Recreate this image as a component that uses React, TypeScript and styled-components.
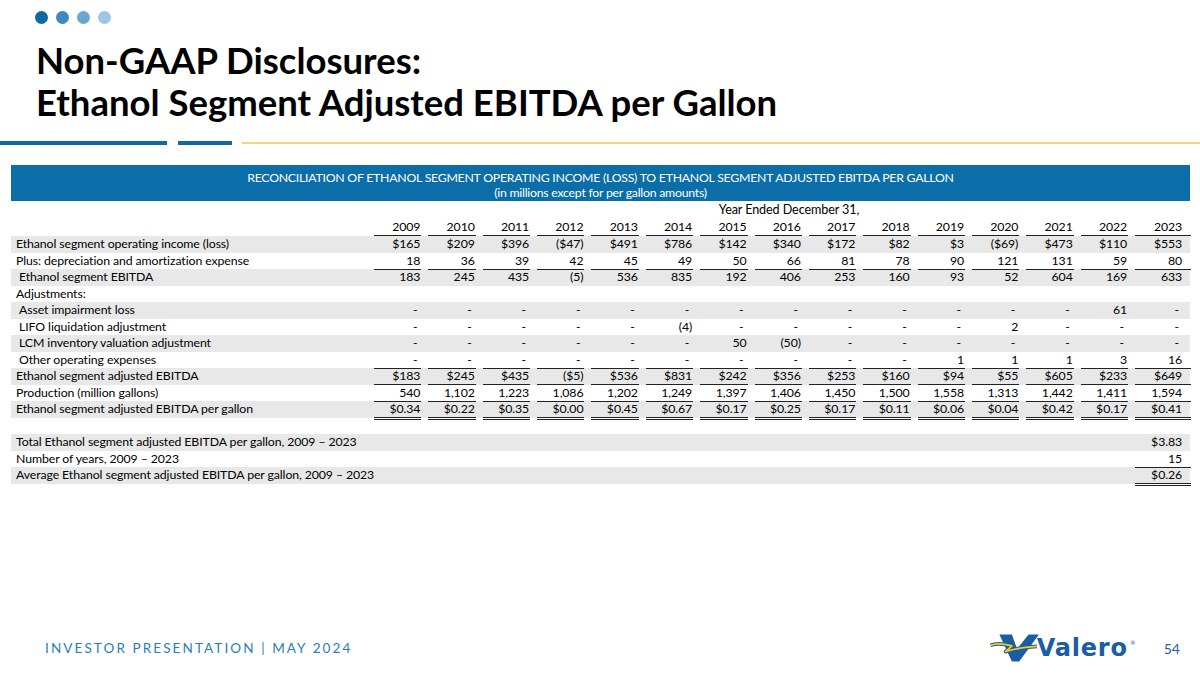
import React from "react";
import styled, { createGlobalStyle } from "styled-components";

const Global = createGlobalStyle`
  html, body { margin: 0; padding: 0; background: #ffffff; }
  body { font-family: Lato, "Open Sans", sans-serif; color: #111; }
  * { box-sizing: border-box; }
`;

const Slide = styled.div`
  width: 1200px;
  height: 675px;
  display: flex;
  flex-direction: column;
  overflow: hidden;
  background: #fff;
`;

const Dots = styled.div`
  display: flex;
  gap: 8px;
  padding: 11px 0 0 35px;
`;

const Dot = styled.span<{ $c: string }>`
  width: 13px;
  height: 13px;
  border-radius: 50%;
  background: ${(p) => p.$c};
`;

const Title = styled.h1`
  margin: 15px 0 0 36px;
  font-family: Lato, sans-serif;
  font-weight: 700;
  font-size: 36.5px;
  line-height: 42px;
  color: #000;
`;

const Rule = styled.div`
  display: flex;
  align-items: center;
  margin-top: 18px;
  height: 4px;
  width: 1200px;
`;

const RuleSeg = styled.div<{ $w: number; $ml: number }>`
  flex: none;
  width: ${(p) => p.$w}px;
  margin-left: ${(p) => p.$ml}px;
  height: 4px;
  background: #1068a8;
`;

const GoldLine = styled.div`
  width: 958px;
  margin-left: 10px;
  height: 2px;
  background: #f4d77c;
`;

const Table = styled.div`
  margin: 20px 10px 0 10px;
  width: 1180px;
  font-size: 12.3px;
  letter-spacing: -0.1px;
  color: #000;
`;

const HeaderBar = styled.div`
  background: #0b6ea9;
  color: #fff;
  text-align: center;
  padding: 5px 0 1px;
  line-height: 15px;
  height: 36px;
  margin-left: 1px;
  letter-spacing: -0.25px;
`;

const GRID = "356px repeat(14, 54.36px) 63px";

const Row = styled.div<{ $shade?: boolean; $tall?: boolean }>`
  display: grid;
  grid-template-columns: ${GRID};
  height: ${(p) => (p.$tall ? 17.5 : 16.5)}px;
  background: ${(p) => (p.$shade ? "#e8e8e8" : "transparent")};
  margin-left: 1px;
`;

const YearCaption = styled.div`
  grid-column: 2 / -1;
  text-align: center;
  padding-left: 20px;
  line-height: 18px;
  font-size: 12.6px;
`;

const Label = styled.div<{ $indent?: boolean }>`
  padding-left: ${(p) => (p.$indent ? 8 : 5)}px;
  line-height: 16.5px;
  white-space: nowrap;
`;

const WideLabel = styled(Label)`
  grid-column: 1 / 16;
`;

const Cell = styled.div<{ $line?: "single" | "double"; $dash?: boolean; $last?: boolean }>`
  margin-left: 7px;
  text-align: right;
  white-space: nowrap;
  line-height: 16px;
  padding-right: ${(p) => (p.$last ? 9 : 1) + (p.$dash ? 3 : 0)}px;
  border-bottom: ${(p) =>
    p.$line === "double" ? "3px double #222" : p.$line === "single" ? "1px solid #222" : "none"};
`;

const Footer = styled.div`
  margin-top: auto;
  display: flex;
  align-items: center;
  height: 36px;
  margin-bottom: 9px;
  padding-left: 45px;
`;

const FooterText = styled.div`
  font-family: Lato, sans-serif;
  font-size: 13.5px;
  letter-spacing: 2.1px;
  color: #2a7db9;
`;

const Logo = styled.div`
  margin-left: auto;
  display: flex;
  align-items: center;
`;

const LogoWord = styled.span`
  font-family: "DejaVu Sans", sans-serif;
  font-weight: 700;
  font-size: 24px;
  letter-spacing: 0.8px;
  color: #1a5ca6;
  margin-left: -3px;
`;

const Reg = styled.sup`
  font-family: "DejaVu Sans", sans-serif;
  font-size: 6px;
  color: #1a5ca6;
  margin-left: 2px;
  align-self: flex-start;
  margin-top: 6px;
`;

const PageNum = styled.div`
  font-family: Lato, sans-serif;
  font-size: 14px;
  color: #1f5f9c;
  margin: 0 20px 0 28px;
`;

const years = ["2009","2010","2011","2012","2013","2014","2015","2016","2017","2018","2019","2020","2021","2022","2023"];

type Line = "single" | "double" | undefined;
type DataRow = { label: string; indent?: boolean; values?: string[]; line?: Line };

const d = (arr: (string | number)[]) => arr.map(String);

const rows: DataRow[] = [
  { label: "Ethanol segment operating income (loss)", values: d(["$165","$209","$396","($47)","$491","$786","$142","$340","$172","$82","$3","($69)","$473","$110","$553"]) },
  { label: "Plus: depreciation and amortization expense", values: d([18,36,39,42,45,49,50,66,81,78,90,121,131,59,80]), line: "single" },
  { label: "Ethanol segment EBITDA", indent: true, values: d([183,245,435,"(5)",536,835,192,406,253,160,93,52,604,169,633]) },
  { label: "Adjustments:" },
  { label: "Asset impairment loss", indent: true, values: d(["-","-","-","-","-","-","-","-","-","-","-","-","-","61","-"]) },
  { label: "LIFO liquidation adjustment", indent: true, values: d(["-","-","-","-","-","(4)","-","-","-","-","-","2","-","-","-"]) },
  { label: "LCM inventory valuation adjustment", indent: true, values: d(["-","-","-","-","-","-","50","(50)","-","-","-","-","-","-","-"]) },
  { label: "Other operating expenses", indent: true, values: d(["-","-","-","-","-","-","-","-","-","-","1","1","1","3","16"]), line: "single" },
  { label: "Ethanol segment adjusted EBITDA", values: d(["$183","$245","$435","($5)","$536","$831","$242","$356","$253","$160","$94","$55","$605","$233","$649"]), line: "single" },
  { label: "Production (million gallons)", values: d(["540","1,102","1,223","1,086","1,202","1,249","1,397","1,406","1,450","1,500","1,558","1,313","1,442","1,411","1,594"]), line: "single" },
  { label: "Ethanol segment adjusted EBITDA per gallon", values: d(["$0.34","$0.22","$0.35","$0.00","$0.45","$0.67","$0.17","$0.25","$0.17","$0.11","$0.06","$0.04","$0.42","$0.17","$0.41"]), line: "double" },
];

type TotalRow = { label: string; value: string; line?: Line };
const totals: TotalRow[] = [
  { label: "Total Ethanol segment adjusted EBITDA per gallon, 2009 \u2013 2023", value: "$3.83" },
  { label: "Number of years, 2009 \u2013 2023", value: "15", line: "single" },
  { label: "Average Ethanol segment adjusted EBITDA per gallon, 2009 \u2013 2023", value: "$0.26", line: "double" },
];

const ValeroMark = () => (
  <svg width="50" height="30" viewBox="0 0 48 28" style={{ display: "block" }}>
    <polygon points="9,1 21,1 26,15 37,1 47,1 28,27 21,27" fill="#1a5ca6" />
    <path
      d="M0.5,11.5 C6,9 12,9.5 21,12 L15,17.5 C22,15 32,13.5 45,12.5"
      fill="none"
      stroke="#1a5ca6"
      strokeWidth="3.6"
      strokeLinejoin="round"
    />
    <path
      d="M0.5,11.5 C6,9 12,9.5 21,12 L15,17.5 C22,15 32,13.5 45,12.5"
      fill="none"
      stroke="#f3cc1c"
      strokeWidth="1.8"
      strokeLinejoin="round"
    />
  </svg>
);

export default function App() {
  return (
    <>
      <Global />
      <Slide>
        <Dots>
          <Dot $c="#0d68a6" />
          <Dot $c="#3b89bf" />
          <Dot $c="#69a7d1" />
          <Dot $c="#9bc7e3" />
        </Dots>
        <Title>
          Non-GAAP Disclosures:
          <br />
          Ethanol Segment Adjusted EBITDA per Gallon
        </Title>
        <Rule>
          <RuleSeg $w={167} $ml={0} />
          <RuleSeg $w={54} $ml={11} />
          <GoldLine />
        </Rule>
        <Table>
          <HeaderBar>
            RECONCILIATION OF ETHANOL SEGMENT OPERATING INCOME (LOSS) TO ETHANOL SEGMENT ADJUSTED EBITDA PER GALLON
            <br />
            (in millions except for per gallon amounts)
          </HeaderBar>
          <Row $tall>
            <YearCaption>Year Ended December 31,</YearCaption>
          </Row>
          <Row $tall>
            <Label />
            {years.map((y, i) => (
              <Cell key={y} $line="single" $last={i === 14}>
                {y}
              </Cell>
            ))}
          </Row>
          {rows.map((r, ri) => (
            <Row key={r.label} $shade={ri % 2 === 0}>
              <Label $indent={r.indent}>{r.label}</Label>
              {r.values?.map((v, i) => (
                <Cell key={i} $line={r.line} $dash={v === "-"} $last={i === 14}>
                  {v}
                </Cell>
              ))}
            </Row>
          ))}
          <Row />
          {totals.map((t, ti) => (
            <Row key={t.label} $shade={ti % 2 === 0}>
              <WideLabel>{t.label}</WideLabel>
              <Cell $line={t.line} $last>
                {t.value}
              </Cell>
            </Row>
          ))}
        </Table>
        <Footer>
          <FooterText>INVESTOR PRESENTATION | MAY 2024</FooterText>
          <Logo>
            <ValeroMark />
            <LogoWord>Valero</LogoWord>
            <Reg>®</Reg>
          </Logo>
          <PageNum>54</PageNum>
        </Footer>
      </Slide>
    </>
  );
}
